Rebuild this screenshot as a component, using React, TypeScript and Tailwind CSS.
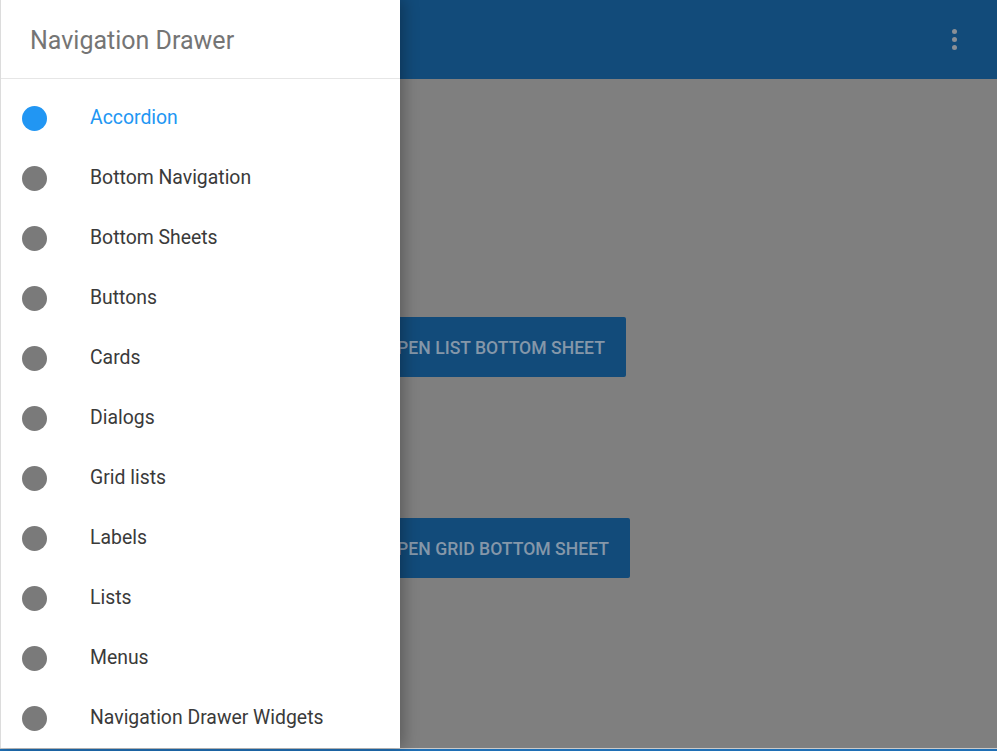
import React from 'react';

const items = [
    'Accordion',
    'Bottom Navigation',
    'Bottom Sheets',
    'Buttons',
    'Cards',
    'Dialogs',
    'Grid lists',
    'Labels',
    'Lists',
    'Menus',
    'Navigation Drawer Widgets',
];

const SheetButton: React.FC<{ label: string }> = ({ label }) => (
    <div className="w-fit h-[60px] flex items-center pl-[15px] pr-[21px] pt-[3px] rounded-[2px] bg-[#124b7a] text-[#8597a9] text-[17.6px] font-medium uppercase">
        {label}
    </div>
);

const Drawer: React.FC = () => (
    <div className="absolute left-0 top-0 w-[400px] h-[748px] bg-white border-l border-[#dcdcdc] shadow-[4px_0_14px_rgba(0,0,0,0.28)] flex flex-col">
        <div className="h-[79px] shrink-0 border-b border-[#e6e6e6] flex items-center pl-[29px] pt-[3px] text-[25px] text-[#757575]">
            Navigation Drawer
        </div>
        <ul className="pt-[9px] flex flex-col">
            {items.map((item, i) => (
                <li key={item} className="h-[60px] flex items-center">
                    <span
                        className={`ml-[21px] w-[25px] h-[25px] rounded-full shrink-0 ${i === 0 ? 'bg-[#2196f3]' : 'bg-[#7a7a7a]'}`}
                    />
                    <span className={`ml-[43px] text-[19.4px] ${i === 0 ? 'text-[#2196f3]' : 'text-[#3a3a3a]'}`}>
                        {item}
                    </span>
                </li>
            ))}
        </ul>
    </div>
);

export default function App() {
    return (
        <div
            className="relative w-[997px] h-[751px] overflow-hidden bg-[#7f7f7f]"
            style={{ fontFamily: 'Roboto, "Noto Sans", sans-serif' }}
        >
            <div className="flex flex-col h-[748px]">
                {/* app bar, dimmed by the scrim */}
                <div className="h-[79px] shrink-0 bg-[#124b7a] flex items-center justify-end pr-[40px]">
                    <div className="flex flex-col gap-[3px]">
                        <span className="w-[5px] h-[5px] rounded-full bg-[#8a8f96]" />
                        <span className="w-[5px] h-[5px] rounded-full bg-[#8a8f96]" />
                        <span className="w-[5px] h-[5px] rounded-full bg-[#8a8f96]" />
                    </div>
                </div>
                <div className="flex-1 flex flex-col pl-[370px] pt-[238px] gap-[141px]">
                    <SheetButton label="Open list bottom sheet" />
                    <SheetButton label="Open grid bottom sheet" />
                </div>
            </div>
            <div className="h-[1px] bg-[#c9c9c9]" />
            <div className="h-[2px] bg-[#1f6fb5]" />
            <Drawer />
        </div>
    );
}
